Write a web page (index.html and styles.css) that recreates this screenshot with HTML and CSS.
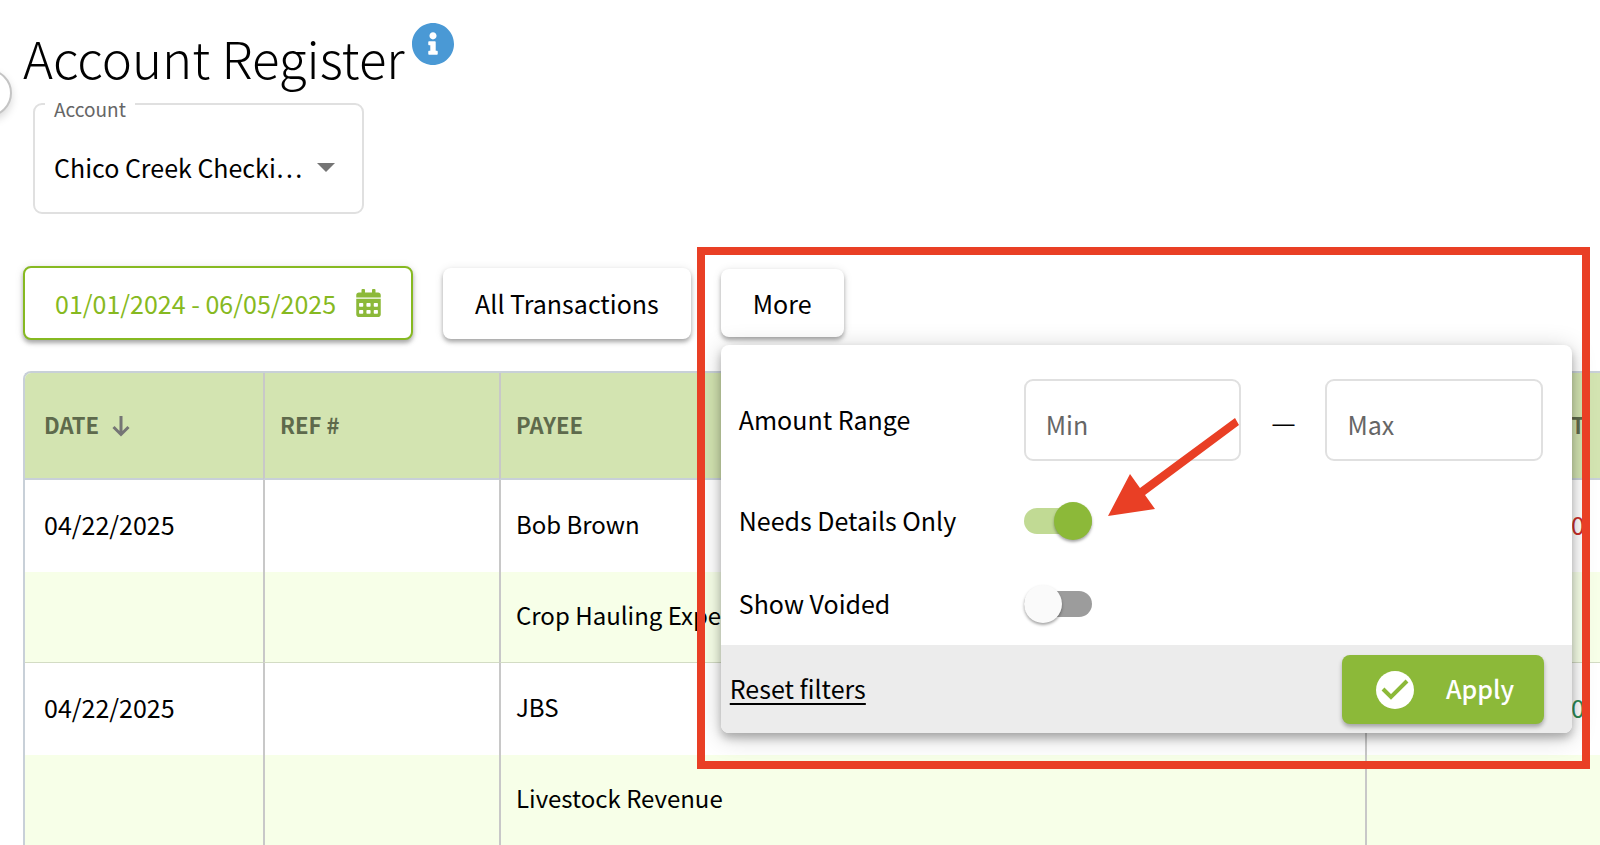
FILE: index.html
```html
<!DOCTYPE html>
<html lang="en">
<head>
<meta charset="utf-8">
<title>Account Register</title>
<link rel="stylesheet" href="styles.css">
</head>
<body>
<button class="drawer-toggle" type="button" aria-label="Open menu"></button>
<main class="page">
  <header class="heading">
    <h1 class="title">Account Register</h1>
    <svg class="info" viewBox="8 8 496 496" role="img" aria-label="Information"><path d="M256 8C119.043 8 8 119.083 8 256c0 136.997 111.043 248 248 248s248-111.003 248-248C504 119.083 392.957 8 256 8zm0 110c23.196 0 42 18.804 42 42s-18.804 42-42 42-42-18.804-42-42 18.804-42 42-42zm56 254c0 6.627-5.373 12-12 12h-88c-6.627 0-12-5.373-12-12v-24c0-6.627 5.373-12 12-12h12v-64h-12c-6.627 0-12-5.373-12-12v-24c0-6.627 5.373-12 12-12h64c6.627 0 12 5.373 12 12v100h12c6.627 0 12 5.373 12 12v24z"/></svg>
  </header>

  <div class="account">
    <label class="account-label" for="account">Account</label>
    <select class="account-select" id="account"><option>Chico Creek Checki…</option></select>
    <svg class="caret" viewBox="0 0 18 9" aria-hidden="true"><path d="M0 0h18L9 9z"/></svg>
  </div>

  <div class="filters">
    <button class="btn btn-date" type="button">01/01/2024 - 06/05/2025
      <svg class="calendar" viewBox="0 0 448 512" aria-hidden="true"><path fill-rule="evenodd" d="M0 464c0 26.500 21.500 48 48 48h352c26.500 0 48-21.500 48-48V180H0zM52 268q0-12 12-12h52q12 0 12 12v44q0 12-12 12H64q-12 0-12-12zM186 268q0-12 12-12h52q12 0 12 12v44q0 12-12 12h-52q-12 0-12-12zM320 268q0-12 12-12h52q12 0 12 12v44q0 12-12 12h-52q-12 0-12-12zM52 396q0-12 12-12h52q12 0 12 12v44q0 12-12 12H64q-12 0-12-12zM186 396q0-12 12-12h52q12 0 12 12v44q0 12-12 12h-52q-12 0-12-12zM320 396q0-12 12-12h52q12 0 12 12v44q0 12-12 12h-52q-12 0-12-12zM400 64h-48V16c0-8.800-7.200-16-16-16h-32c-8.800 0-16 7.200-16 16v48H160V16c0-8.800-7.200-16-16-16h-32c-8.800 0-16 7.200-16 16v48H48C21.500 64 0 85.500 0 112v42h448v-42c0-26.500-21.500-48-48-48z"/></svg>
    </button>
    <button class="btn btn-all" type="button">All Transactions</button>
    <div class="more">
      <button class="btn btn-more" type="button" aria-expanded="true">More</button>
      <form class="panel">
        <div class="panel-body">
          <div class="row row-range">
            <label class="row-label" for="min">Amount Range</label>
            <div class="range">
              <input class="amount" id="min" type="text" placeholder="Min">
              <span class="dash">—</span>
              <input class="amount" id="max" type="text" placeholder="Max" aria-label="Maximum amount">
            </div>
          </div>
          <div class="row">
            <label class="row-label" for="details">Needs Details Only</label>
            <input class="switch" id="details" type="checkbox" checked>
          </div>
          <div class="row">
            <label class="row-label" for="voided">Show Voided</label>
            <input class="switch" id="voided" type="checkbox">
          </div>
        </div>
        <div class="panel-footer">
          <a class="reset" href="#">Reset filters</a>
          <button class="apply" type="button">
            <svg class="check" viewBox="0 0 38 38" aria-hidden="true"><circle cx="19" cy="19" r="19" fill="#fff"/><path d="M7 18l8 8L31 10" fill="none" stroke="#8cb939" stroke-width="4"/></svg>
            <span class="apply-text">Apply</span>
          </button>
        </div>
      </form>
      <div class="highlight"></div>
      <svg class="arrow" viewBox="0 0 132 102" aria-hidden="true"><path d="M127 1L32 71L22 57L0 99L47 92L37 78L131 8z"/></svg>
    </div>
  </div>

  <table class="register">
    <colgroup><col class="col-date"><col class="col-ref"><col><col class="col-amount"></colgroup>
    <thead>
      <tr>
        <th>DATE <svg class="sort" viewBox="0 0 18 21" aria-hidden="true"><path d="M9 0v18M1.500 11L9 18.500L16.500 11" fill="none" stroke="#757575" stroke-width="3"/></svg></th>
        <th>REF #</th>
        <th>PAYEE</th>
        <th class="num">AMOUNT</th>
      </tr>
    </thead>
    <tbody>
      <tr><td>04/22/2025</td><td></td><td class="payee">Bob Brown</td><td class="num debit">0.00</td></tr>
      <tr class="sub"><td></td><td></td><td class="payee">Crop Hauling Expense</td><td></td></tr>
      <tr><td>04/22/2025</td><td></td><td class="payee">JBS</td><td class="num credit">0.00</td></tr>
      <tr class="sub"><td></td><td></td><td class="payee">Livestock Revenue</td><td></td></tr>
    </tbody>
  </table>
</main>
</body>
</html>
```
FILE: styles.css
```css
* { box-sizing: border-box; }

html { overflow: hidden; }

body {
  margin: 0;
  background: #fff;
  color: #000;
  font-family: "Noto Sans CJK KR", "Noto Sans", sans-serif;
  font-size: 25px;
  line-height: 36px;
}

button, input, select {
  font: inherit;
  color: inherit;
}

.page { padding: 20px 0 0 23px; }

.drawer-toggle {
  position: absolute;
  left: -36px;
  top: 69px;
  width: 48px;
  height: 48px;
  border: 2px solid #c4c4c4;
  border-radius: 50%;
  background: #fff;
  box-shadow: 0 4px 8px rgba(0, 0, 0, .15);
}

.heading {
  display: flex;
  align-items: flex-start;
  gap: 7px;
  min-height: 80px;
}

.title {
  margin: 0;
  font-size: 51px;
  font-weight: 300;
  line-height: 74px;
}

.info {
  width: 42px;
  height: 42px;
  margin-top: 3px;
  fill: #4a99d5;
}

.account {
  position: relative;
  width: 331px;
  margin: 3px 0 0 10px;
}

.account-label {
  position: absolute;
  left: 12px;
  top: -8px;
  padding: 0 9px;
  background: #fff;
  color: #666;
  font-size: 19px;
  line-height: 28px;
}

.account-select {
  appearance: none;
  display: block;
  width: 100%;
  height: 111px;
  padding: 16px 19px 0;
  border: 2px solid #e0e0e0;
  border-radius: 9px;
  background: #fff;
}

.caret {
  position: absolute;
  right: 29px;
  top: 60px;
  width: 18px;
  height: 9px;
  fill: #757575;
}

.filters {
  display: flex;
  align-items: center;
  gap: 30px;
  height: 74px;
  margin-top: 52px;
}

.btn {
  flex: none;
  height: 71px;
  padding: 0 32px;
  border: 0;
  border-radius: 8px;
  background: #fff;
  box-shadow: 0 3px 4px rgba(0, 0, 0, .3), 0 1px 10px rgba(0, 0, 0, .1);
}

.btn-date {
  display: flex;
  align-items: center;
  gap: 20px;
  height: 74px;
  padding: 0 30px;
  border: 2px solid #86b921;
  color: #86b921;
}

.calendar {
  width: 25px;
  height: 28px;
  fill: #8cb939;
}

.more {
  position: relative;
  flex: 1;
}

.btn-more {
  display: block;
  height: 68px;
}

.panel {
  position: absolute;
  z-index: 1;
  top: 76px;
  left: 0;
  right: 28px;
  border-radius: 8px;
  background: #fff;
  box-shadow: 0 5px 8px rgba(0, 0, 0, .25), 0 4px 26px rgba(0, 0, 0, .2);
}

.panel-body { padding: 34px 29px 0 18px; }

.row {
  display: grid;
  grid-template-columns: 285px minmax(0, 1fr);
  align-items: center;
  height: 83px;
}

.row-range {
  height: 82px;
  margin-bottom: 18px;
}

.row-label { padding-bottom: 2px; }

.range {
  display: flex;
  align-items: center;
}

.amount {
  flex: 1;
  width: 0;
  height: 82px;
  padding: 8px 20px 0;
  border: 2px solid #e0e0e0;
  border-radius: 9px;
  background: #fff;
}

.amount::placeholder { color: #666; }

.dash {
  flex: none;
  width: 84px;
  padding-top: 8px;
  font-family: "Liberation Sans", sans-serif;
  font-size: 22px;
  text-align: center;
}

.switch {
  appearance: none;
  display: flex;
  align-items: center;
  width: 68px;
  height: 26px;
  margin: 0;
  border-radius: 13px;
  background: #9c9c9c;
}

.switch::before {
  content: "";
  width: 38px;
  height: 38px;
  border-radius: 50%;
  background: #fafafa;
  box-shadow: 0 2px 3px rgba(0, 0, 0, .35);
}

.switch:checked {
  justify-content: flex-end;
  background: #c1da94;
}

.switch:checked::before { background: #8cb939; }

.panel-footer {
  display: flex;
  align-items: center;
  justify-content: space-between;
  padding: 10px 28px 9px 9px;
  border-radius: 0 0 8px 8px;
  background: #ececec;
}

.reset {
  padding-bottom: 4px;
  color: #000;
  text-decoration-thickness: 2px;
  text-underline-offset: 4px;
}

.apply {
  display: flex;
  align-items: center;
  gap: 32px;
  height: 69px;
  padding: 0 30px 0 34px;
  border: 0;
  border-radius: 8px;
  background: #8cb939;
  box-shadow: 0 3px 4px rgba(0, 0, 0, .3);
  color: #fff;
  font-weight: 500;
}

.apply-text { padding-bottom: 4px; }

.check {
  width: 38px;
  height: 38px;
}

.highlight {
  position: absolute;
  z-index: 2;
  top: -22px;
  left: -24px;
  right: 10px;
  height: 522px;
  border: 8px solid #e93f25;
  pointer-events: none;
}

.arrow {
  position: absolute;
  z-index: 3;
  top: 148px;
  left: 387px;
  width: 132px;
  height: 102px;
  fill: #e93f25;
}

.register {
  width: 100%;
  margin-top: 31px;
  border: 2px solid #c8d0d8;
  border-right: 0;
  border-radius: 8px 0 0 0;
  border-spacing: 0;
  table-layout: fixed;
  font-size: 25px;
}

.col-date { width: 238px; }
.col-ref { width: 236px; }
.col-amount { width: 235px; }

.register th,
.register td {
  padding: 0 15px 4px;
  border-left: 2px solid #c8c8c8;
  text-align: left;
  white-space: nowrap;
}

.register th:first-child,
.register td:first-child {
  padding-left: 19px;
  border-left: 0;
}

.register th {
  height: 107px;
  border-bottom: 2px solid #c8d0d8;
  background: #d3e4b1;
  color: #5e6a4c;
  font-size: 22px;
  font-weight: 700;
}

.register th:first-child { border-top-left-radius: 6px; }

.register td { height: 92px; }

.register .sub td {
  height: 91px;
  border-bottom: 1px solid #d3dcc4;
  background: #f7ffe8;
}

.register .payee { font-size: 24px; }

.register .num { text-align: right; }

.register .debit { color: #c9302c; }
.register .credit { color: #2e8b57; }

.sort {
  width: 18px;
  height: 21px;
  margin-left: 8px;
  vertical-align: -3px;
}
```
